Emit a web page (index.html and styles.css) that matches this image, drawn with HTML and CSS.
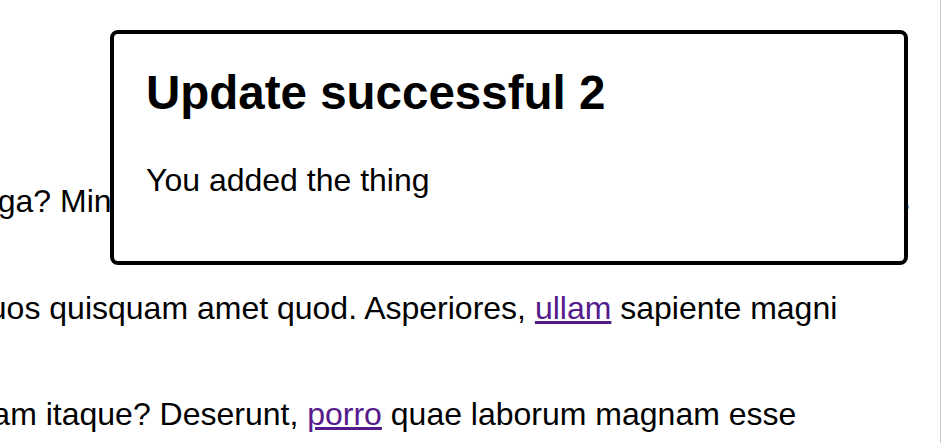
FILE: index.html
```html
<!DOCTYPE html>
<html lang="en">
<head>
    <meta charset="UTF-8">
    <title>Update successful</title>
    <link rel="stylesheet" href="styles.css">
</head>
<body>
    <div class="page">
        <main class="content">
            <p>fuga? Minima dolorum quis eligendi nesciunt officia sit repellendus</p>
            <p>quos quisquam amet quod. Asperiores, <a href="#">ullam</a> sapiente magni</p>
            <p>Eam itaque? Deserunt, <a href="#">porro</a> quae laborum magnam esse</p>
        </main>

        <!-- notice shown after saving -->
        <div class="notice" role="dialog">
            <h2>Update successful 2</h2>
            <p>You added the thing</p>
        </div>
    </div>
</body>
</html>
```

FILE: styles.css
```css
html, body {
    margin: 0;
    padding: 0;
    background-color: #fff;
    overflow: hidden;
}
body {
    font-family: "Liberation Sans", Arial, Helvetica, sans-serif;
    font-size: 32px;
    color: #000;
}
.page {
    position: relative;
    width: 940px;
    height: 100vh;
    border-right: 1px solid #c8c8c8; /* edge of the scrolled page */
    overflow: hidden;
}
.content {
    padding-top: 183px;
    margin-left: -29px; /* page is scrolled a little to the right */
    white-space: nowrap;
}
.content p {
    margin: 0 0 70px;
    line-height: 36.5px;
}
a {
    color: #551a8b;
    text-decoration: underline;
}
.notice {
    position: absolute;
    top: 30px;
    left: 110px;
    box-sizing: border-box;
    width: 798px;
    height: 235px;
    padding: 0 32px;
    background-color: #fff;
    border: 4px solid #000;
    border-radius: 8px;
}
.notice h2 {
    font-size: 47.5px;
    font-weight: bold;
    margin: 31px 0 42px;
}
.notice p {
    margin: 0;
}
```
